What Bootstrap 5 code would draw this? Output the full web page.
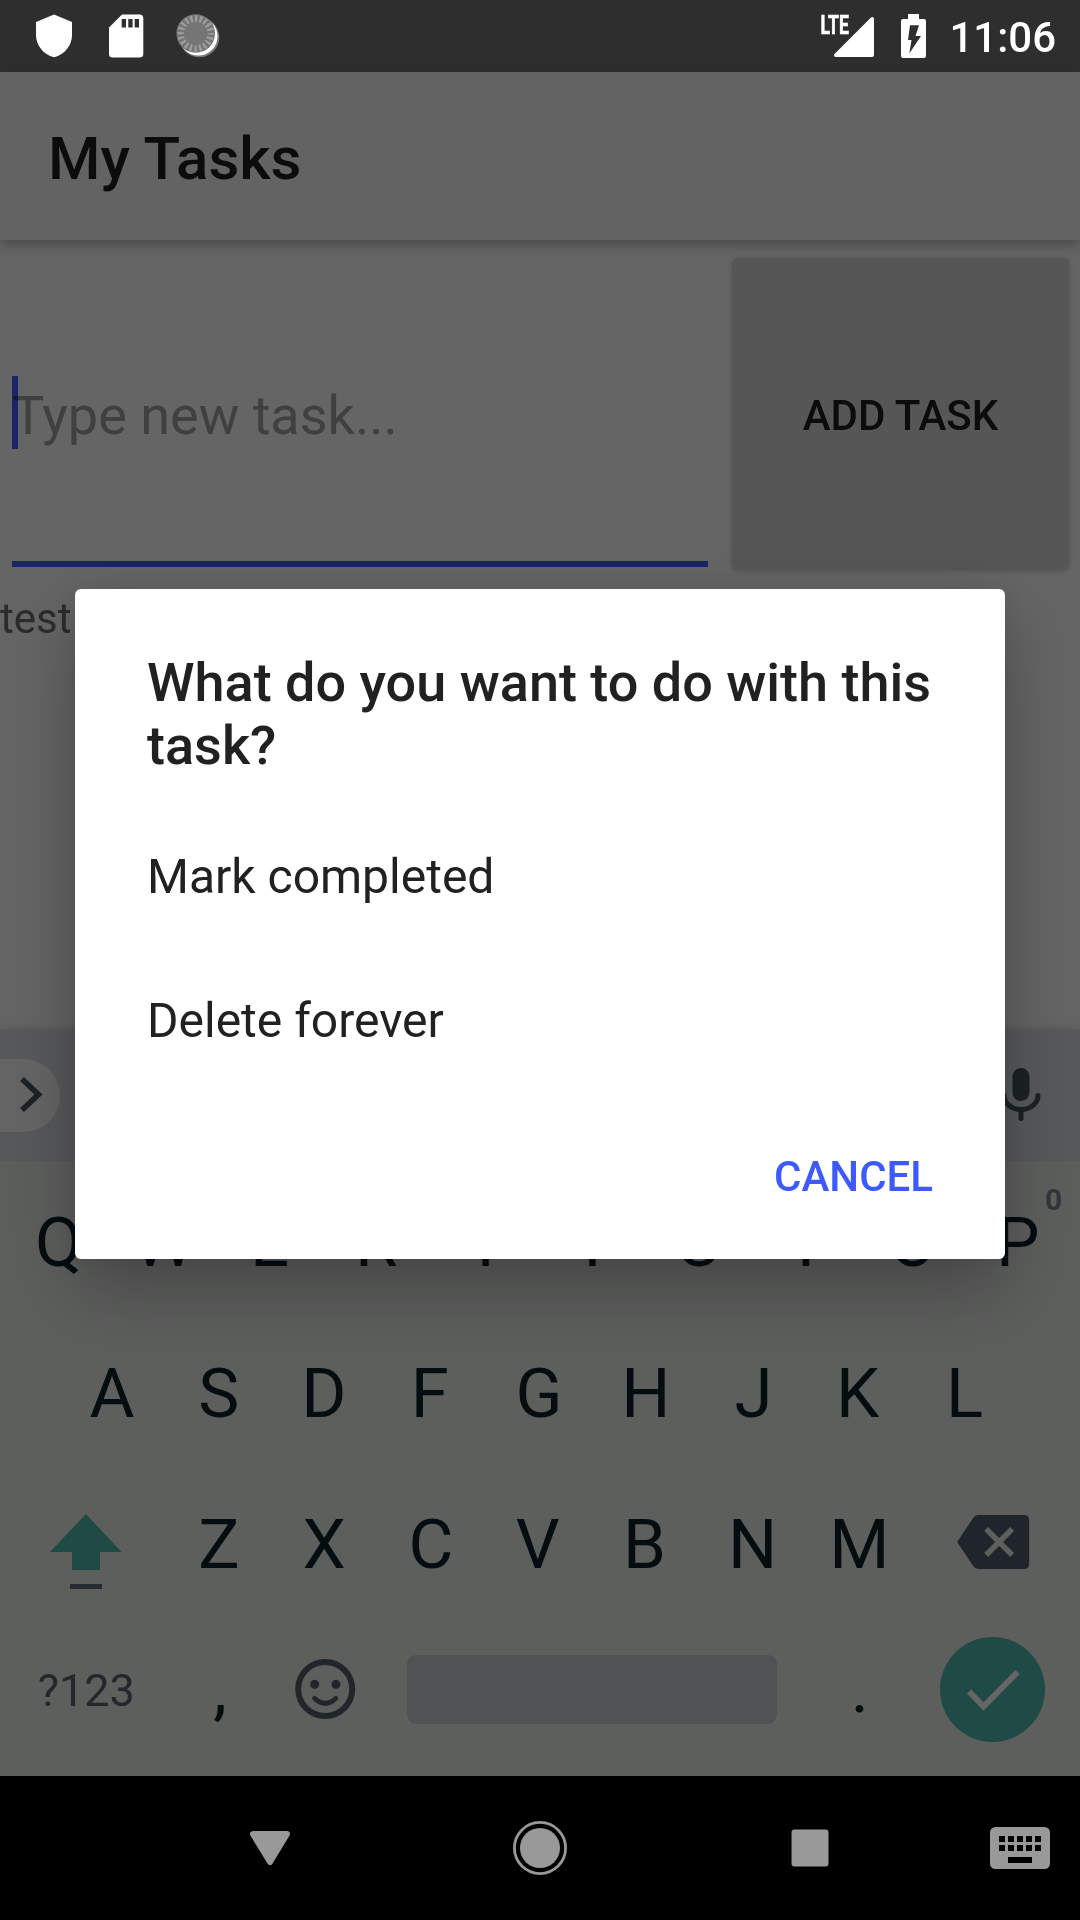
<!DOCTYPE html>
<html lang="en">
<head>
<meta charset="utf-8">
<meta name="viewport" content="width=device-width, initial-scale=1">
<title>My Tasks</title>
<link href="https://cdn.jsdelivr.net/npm/bootstrap@5.3.0/dist/css/bootstrap.min.css" rel="stylesheet">
<style>
  body { font-family: Roboto, "Liberation Sans", sans-serif; background: #666; line-height: 1.1719; }
  .screen { width: 1080px; height: 1920px; background: #656565; }
  svg { display: block; flex: none; }
  .med { font-weight: 500; }
  .statusbar { height: 72px; background: #2e2e2e; color: #fff; padding: 0 24px 0 36px; }
  .clock { font-size: 42px; padding-top: 3px; }
  .appbar { height: 168px; background: #636363; padding: 6px 48px 0; box-shadow: 0 5px 11px rgba(0,0,0,.27); z-index: 1; }
  .appbar h1 { font-size: 60px; color: #0c0c0c; line-height: 1.1719; }
  .entry { height: 336px; padding: 18px 11px 0 12px; }
  .field { width: 696px; height: 309px; border-bottom: 6px solid #1a2466; padding-top: 118px; }
  .caret { width: 6px; height: 73px; background: #1a2466; }
  .hint { font-size: 54px; color: #a1a1a1; margin: 8px 0 0 -6px; mix-blend-mode: multiply; z-index: 1; }
  .add-btn { width: 337px; height: 312px; background: #565656; border: 0; border-radius: 6px; font-size: 42px; color: #0c0c0c; box-shadow: 0 1px 5px rgba(0,0,0,.2); padding: 3px 0 0; }
  .tasks { font-size: 42px; color: #2c2c2c; padding-top: 18px; }
  .suggest { height: 132px; background: #58595b; box-shadow: 0 -2px 6px rgba(0,0,0,.08); padding-right: 36px; }
  .expand { width: 60px; height: 73px; background: #656565; border-radius: 0 37px 37px 0; padding-left: 18px; }
  .keys { height: 615px; background: #5d5f5d; color: #050d10; font-size: 69px; padding-top: 6px; }
  .krow { height: 151.5px; }
  .krow.first { padding: 2px 2px 0 0; }
  .krow.second { padding-right: 2px; }
  .krow.last { height: 136px; }
  .key { width: 106.75px; text-align: center; flex: none; }
  .nl { padding-right: 3px; }
  .nll { padding-right: 5px; }
  .nr { padding-left: 2px; }
  .wide { width: 165.6px; flex: none; }
  .sym { font-size: 45px; color: #23282c; padding: 3px 0 0 7px; }
  .digit { font-size: 30px; font-weight: 700; color: #33353a; left: 79px; top: -21px; line-height: 35px; }
  .space { width: 370px; height: 69px; background: #515254; border-radius: 9px; margin: 0 28.5px 0 28px; }
  .enter { width: 105px; height: 105px; background: #1f4a45; margin-left: 28px; }
  .navrow { height: 144px; background: #000; padding-left: 250px; }
  .gap-home { margin-right: 223px; }
  .gap-recent { margin-right: 224px; }
  .gap-kb { margin-right: 161px; }
  .dialog { left: 75px; top: 589px; width: 930px; height: 670px; background: #fff; border-radius: 6px; color: #212121; padding: 62px 72px 0; z-index: 5;
    box-shadow: 0 30px 72px rgba(0,0,0,.26), 0 0 20px rgba(0,0,0,.06); }
  .dialog h2 { font-size: 54px; line-height: 63px; margin: 0 -20px 0 0; }
  .choices { padding-top: 28px; }
  .choice { font-size: 48px; height: 144px; }
  .cancel { font-size: 42px; color: #3d5afe; padding-top: 11px; }
</style>
<script src="https://cdn.jsdelivr.net/npm/bootstrap@5.3.0/dist/js/bootstrap.bundle.min.js"></script>
</head>
<body>
<div class="screen d-flex flex-column position-relative overflow-hidden">

  <header class="statusbar d-flex align-items-center justify-content-between">
    <svg width="190" height="72" viewBox="36 0 190 72">
      <path d="M54 14.5L72 22V35C72 45 65 54.500 54 57.200C43 54.500 36 45 36 35V22Z" fill="#fff"/>
      <path d="M122 14.500H139.500Q143.300 14.500 143.300 18.500V54Q143.300 57.500 139.500 57.500H112.500Q109 57.500 109 54V27.500Z" fill="#fff"/>
      <path d="M121.700 19h4.300v8.500h-4.300zM128.300 19h4.300v8.500h-4.300zM134.700 19h4.300v8.500h-4.300z" fill="#2e2e2e"/>
      <circle cx="199.300" cy="37.300" r="20" fill="#777"/>
      <circle cx="198.300" cy="36.300" r="19.300" fill="#fff"/>
      <circle cx="195.700" cy="33.500" r="19.300" fill="#757575"/>
      <circle cx="195.700" cy="33.500" r="15" fill="none" stroke="#9e9e9e" stroke-width="6.500" stroke-dasharray="2.200 2.512" stroke-dashoffset="1.100"/>
    </svg>
    <div class="d-flex align-items-center">
      <svg width="131" height="72" viewBox="818 0 131 72">
        <text x="820.500" y="33.500" font-size="26" font-weight="700" fill="#fff" stroke="#fff" stroke-width=".6" textLength="28.500" lengthAdjust="spacingAndGlyphs">LTE</text>
        <path d="M871 17.500Q874 16 874 19V55Q874 57 872 57H836Q833 57 834.500 54Z" fill="#fff"/>
        <path d="M908 14h11v5h5q2 0 2 2v35q0 2-2 2h-21q-2 0-2-2v-35q0-2 2-2h5z" fill="#fff"/>
        <path d="M910 25.300H919L915.500 36H921L909.300 53.500L911.500 40H908Z" fill="#2e2e2e"/>
      </svg>
      <span class="clock med">11:06</span>
    </div>
  </header>

  <nav class="appbar d-flex align-items-center position-relative">
    <h1 class="med m-0">My Tasks</h1>
  </nav>

  <section class="entry d-flex justify-content-between align-items-start">
    <div class="field d-flex align-items-start">
      <div class="caret"></div>
      <div class="hint">Type new task...</div>
    </div>
    <button class="add-btn btn med" type="button">ADD TASK</button>
  </section>
  <main class="tasks flex-grow-1">test</main>

  <div class="suggest d-flex align-items-center justify-content-between">
    <div class="expand d-flex align-items-center">
      <svg width="26" height="40" viewBox="18 1075 26 40"><path d="M22 1079L38.500 1094.500L22 1110" fill="none" stroke="#1c2226" stroke-width="5.600"/></svg>
    </div>
    <svg width="46" height="60" viewBox="998.500 1065 46 60">
      <rect x="1013" y="1068" width="17" height="33" rx="8.500" fill="#1c2224"/>
      <path d="M1004.500 1095.500A17 14 0 0 0 1038.500 1095.500M1021.500 1110V1118.500" fill="none" stroke="#1c2224" stroke-width="5" stroke-linecap="round"/>
    </svg>
  </div>

  <div class="keys">
    <div class="krow first d-flex align-items-center justify-content-center">
      <span class="key">Q</span><span class="key nl">W</span><span class="key nll">E</span><span class="key nll">R</span><span class="key">T</span><span class="key">Y</span><span class="key">U</span><span class="key">I</span><span class="key">O</span><span class="key nl position-relative">P<span class="digit position-absolute">0</span></span>
    </div>
    <div class="krow second d-flex align-items-center justify-content-center">
      <span class="key">A</span><span class="key">S</span><span class="key nl">D</span><span class="key nll">F</span><span class="key">G</span><span class="key">H</span><span class="key nr">J</span><span class="key nl">K</span><span class="key nl">L</span>
    </div>
    <div class="krow d-flex align-items-center">
      <div class="wide">
        <svg width="165" height="100" viewBox="0 1496 165 100">
          <path d="M86 1514L121.500 1552H100V1570H72V1552H50Z" fill="#1f4a45"/>
          <path d="M70 1584h32v5h-32z" fill="#262b2f"/>
        </svg>
      </div>
      <span class="key">Z</span><span class="key nl">X</span><span class="key nl">C</span><span class="key nl">V</span><span class="key nl">B</span><span class="key">N</span><span class="key">M</span>
      <svg width="165" height="100" viewBox="912.850 1496 165 100">
        <path d="M978 1515H1024Q1029 1515 1029 1520V1564Q1029 1569 1024 1569H978Q975 1569 973 1566L957 1542L973 1518Q975 1515 978 1515Z" fill="#1f252a"/>
        <path d="M986 1529L1012 1555M1012 1529L986 1555" stroke="#5d5f5d" stroke-width="5.500"/>
      </svg>
    </div>
    <div class="krow last d-flex align-items-center">
      <span class="wide sym text-center">?123</span>
      <span class="key nr">,</span>
      <div class="key d-flex justify-content-center">
        <svg width="64" height="64" viewBox="293.500 1658 64 64" fill="none" stroke="#20262a">
          <circle cx="324.700" cy="1689" r="27" stroke-width="6"/>
          <circle cx="314.200" cy="1684.300" r="4.500" fill="#20262a" stroke="none"/>
          <circle cx="335.400" cy="1684.300" r="4.500" fill="#20262a" stroke="none"/>
          <path d="M314 1698.300Q324.700 1708.500 335.400 1698.300" stroke-width="4.800" stroke-linecap="round"/>
        </svg>
      </div>
      <div class="space"></div>
      <span class="key nr">.</span>
      <div class="enter rounded-circle">
        <svg width="105" height="105" viewBox="940.500 1636.500 105 105"><path d="M969.500 1691L984 1706L1018 1671.500" fill="none" stroke="#686566" stroke-width="6"/></svg>
      </div>
    </div>
  </div>

  <footer class="navrow d-flex align-items-center">
    <svg class="gap-home" width="40" height="40" viewBox="250 1828 40 40"><path d="M253 1834H287L270 1862Z" fill="#999" stroke="#999" stroke-width="6" stroke-linejoin="round"/></svg>
    <svg class="gap-recent" width="54" height="54" viewBox="-27 -27 54 54"><circle r="25.600" fill="none" stroke="#999" stroke-width="2.800"/><circle r="20" fill="#999"/></svg>
    <svg class="gap-kb" width="38" height="38" viewBox="0 0 38 38"><rect x=".500" y=".500" width="37" height="37" rx="3" fill="#999"/></svg>
    <svg width="60" height="42" viewBox="0 0 60 42"><rect width="60" height="42" rx="5.500" fill="#999"/><path d="M9 9h6v6h-6zM18 9h6v6h-6zM27 9h6v6h-6zM36 9h6v6h-6zM45 9h6v6h-6zM9 18h6v6h-6zM18 18h6v6h-6zM27 18h6v6h-6zM36 18h6v6h-6zM45 18h6v6h-6zM18 30h24v6h-24z" fill="#000"/></svg>
  </footer>

  <div class="dialog position-absolute" role="dialog">
    <h2 class="med">What do you want to do with this task?</h2>
    <div class="choices">
      <div class="choice d-flex align-items-center">Mark completed</div>
      <div class="choice d-flex align-items-center">Delete forever</div>
    </div>
    <div class="d-flex justify-content-end pt-5"><span class="cancel med">CANCEL</span></div>
  </div>
</div>
</body>
</html>
